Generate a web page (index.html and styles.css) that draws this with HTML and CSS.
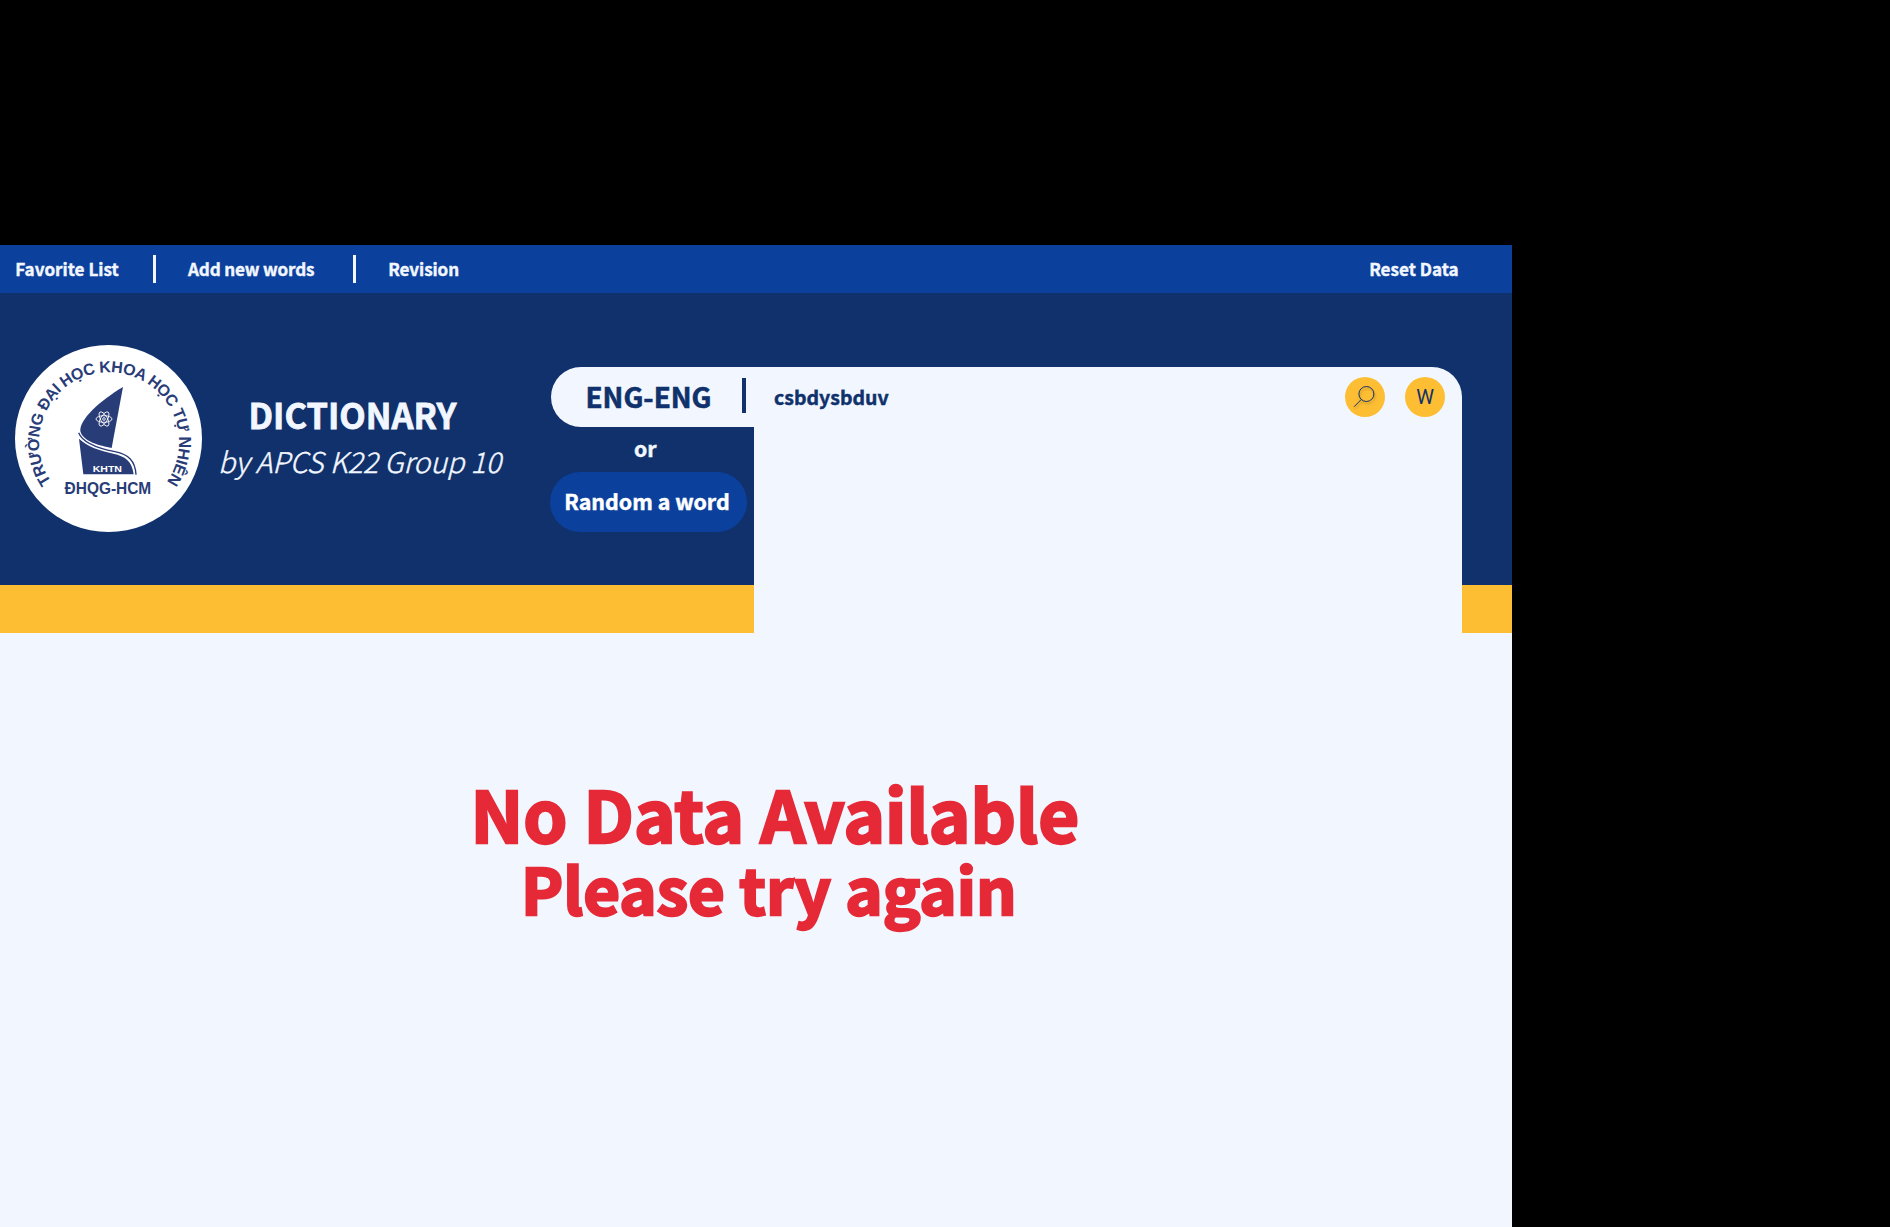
FILE: index.html
```html
<!DOCTYPE html>
<html lang="en">
<head>
<meta charset="utf-8">
<title>Dictionary</title>
<link rel="stylesheet" href="styles.css">
</head>
<body>
<div class="window">
  <nav class="nav">
    <a class="nav-item favorite">Favorite List</a>
    <a class="nav-item add">Add new words</a>
    <a class="nav-item revision">Revision</a>
    <a class="nav-item reset">Reset Data</a>
  </nav>

  <header class="header">
    <svg class="logo" viewBox="0 0 187 187">
      <circle cx="93.5" cy="93.5" r="93.5" fill="#fff"/>
      <path id="ring" d="M36.3 136.9A70 70 0 1 1 151 137.9" fill="none"/>
      <g class="logo-text">
        <text font-size="16"><textPath href="#ring" textLength="304">TRƯỜNG ĐẠI HỌC KHOA HỌC TỰ NHIÊN</textPath></text>
        <text x="49.6" y="148.6" font-size="16" textLength="86.6" lengthAdjust="spacingAndGlyphs">ĐHQG-HCM</text>
      </g>
      <g transform="translate(-15 -15) scale(.33333)">
        <path class="ink" d="M369 171L335 354C300 347 248 335 241 303C238 268 300 212 369 171Z"/>
        <path class="ink" d="M237 326C262 350 300 362 340 371C375 379 396 392 401 433L250 433Z"/>
        <path class="line" d="M236 308C248 340 300 356 345 365C385 373 406 392 408 434"/>
        <g class="atom">
          <ellipse cx="312" cy="267" rx="24" ry="10"/>
          <ellipse cx="312" cy="267" rx="24" ry="10" transform="rotate(60 312 267)"/>
          <ellipse cx="312" cy="267" rx="24" ry="10" transform="rotate(120 312 267)"/>
          <circle cx="312" cy="267" r="4"/>
        </g>
      </g>
      <text class="logo-khtn" x="77.7" y="126.9" font-size="9.9" textLength="29.3" lengthAdjust="spacingAndGlyphs">KHTN</text>
    </svg>

    <div class="brand">
      <h1 class="brand-title">DICTIONARY</h1>
      <p class="brand-by">by APCS K22 Group 10</p>
    </div>

    <div class="search">
      <div class="search-box">
        <span class="mode">ENG-ENG</span>
        <span class="divider"></span>
        <span class="query">csbdysbduv</span>
        <button class="round">
          <svg class="glass" viewBox="0 0 40 40"><circle cx="21.4" cy="17" r="7.5"/><path d="M16.1 22.6L9 29.8"/></svg>
        </button>
        <button class="round">W</button>
        <div class="results"></div>
      </div>
      <p class="or">or</p>
      <button class="random">Random a word</button>
    </div>
  </header>

  <div class="stripe"></div>

  <main class="message">
    <p class="no-data">No Data Available</p>
    <p class="retry">Please try again</p>
  </main>
</div>
</body>
</html>
```
FILE: styles.css
```css
* { box-sizing: border-box; margin: 0; padding: 0; }

body {
  background: #000;
  padding-top: 245px;
  height: 1227px;
  overflow: hidden;
  font-family: "Noto Sans CJK SC", "Noto Sans", sans-serif;
  font-weight: 700;
  color: #f2f7ff;
  white-space: nowrap;
}

button { border: 0; font: inherit; color: inherit; }

.window {
  width: 1512px;
  height: 982px;
  background: #f2f7ff;
  display: flex;
  flex-direction: column;
}

/* Slightly heavier strokes for every bold label */
.nav-item,
.brand-title,
.mode,
.query,
.or,
.random { -webkit-text-stroke: .022em currentColor; }

/* Top navigation */
.nav {
  height: 48px;
  background: #0b409c;
  display: flex;
  align-items: center;
  font-size: 17.1px;
  line-height: 48px;
}
.nav-item { display: flex; align-items: center; }
.favorite { width: 156px; padding-left: 15.3px; }
.add { width: 200px; padding-left: 32px; letter-spacing: -.15px; }
.favorite::after,
.add::after {
  content: "";
  width: 3px;
  height: 28px;
  margin-left: auto;
  background: #f2f7ff;
}
.revision { padding-left: 32.2px; letter-spacing: -.1px; }
.reset { margin-left: auto; padding-right: 53.3px; }

/* Header */
.header {
  height: 292px;
  background: #10316b;
  display: flex;
  align-items: flex-start;
}
.logo { width: 187px; height: 187px; margin: 52px 0 0 15px; flex: none; }
.logo-text { font-family: "Liberation Sans", Arial, sans-serif; font-weight: 700; fill: #283c78; }
.logo-khtn { font-family: "Liberation Sans", Arial, sans-serif; font-weight: 700; fill: #fff; }
.ink { fill: #283c78; }
.line { fill: none; stroke: #283c78; stroke-width: 4; }
.atom { fill: none; stroke: #fff; stroke-width: 2.6; }

.brand { width: 348px; padding-top: 98px; }
.brand-title { font-size: 34.4px; line-height: 47px; padding-left: 46.5px; }
.brand-by {
  font-size: 28.5px;
  line-height: 47px;
  font-weight: 300;
  font-style: italic;
  padding-left: 16px;
  margin-top: -1px;
  -webkit-text-stroke: .016em currentColor;
}

/* Search */
.search { width: 912px; padding-top: 74px; }
.search-box {
  position: relative;
  height: 60px;
  margin-left: 1px;
  padding: 0 17px 0 34.5px;
  background: #f2f7ff;
  border-radius: 30px 30px 0 30px;
  color: #10316b;
  display: flex;
  align-items: center;
}
.mode { width: 156.5px; font-size: 27.8px; line-height: 58px; margin-bottom: 2px; }
.divider { width: 4px; height: 35px; margin-bottom: 3px; background: #10316b; }
.query { flex: 1; padding-left: 28px; font-size: 19.5px; line-height: 60px; }
.round {
  width: 40px;
  height: 40px;
  border-radius: 50%;
  background: #fdbe34;
  font: 400 20px/40px Roboto, sans-serif;
  text-align: center;
}
.round + .round { margin-left: 20px; }
.glass {
  display: block;
  width: 40px;
  height: 40px;
  fill: none;
  stroke: #10316b;
  stroke-width: 1;
  filter: drop-shadow(1px 2px 1px rgba(0, 0, 0, .25));
}
.results {
  position: absolute;
  top: 59px;
  left: 203px;
  right: 0;
  height: 207px;
  background: #f2f7ff;
}
.or { padding-left: 84px; font-size: 21.2px; line-height: 42px; margin-bottom: 3px; }
.random {
  display: block;
  width: 197px;
  height: 60px;
  padding: 0 3px 2px 0;
  border-radius: 30px;
  background: #0b409c;
  color: #fff;
  font-size: 21.4px;
  line-height: 56px;
  text-align: center;
}

.stripe { height: 48px; background: #fdbe34; }

/* Empty result message */
.message { flex: 1; color: #e62937; padding-top: 134px; -webkit-text-stroke: 2.4px currentColor; }
.no-data { font-size: 70.6px; line-height: 80px; margin: 5px 0; padding-left: 470.5px; }
.retry { font-size: 63.4px; line-height: 60px; padding-left: 521px; }
```
